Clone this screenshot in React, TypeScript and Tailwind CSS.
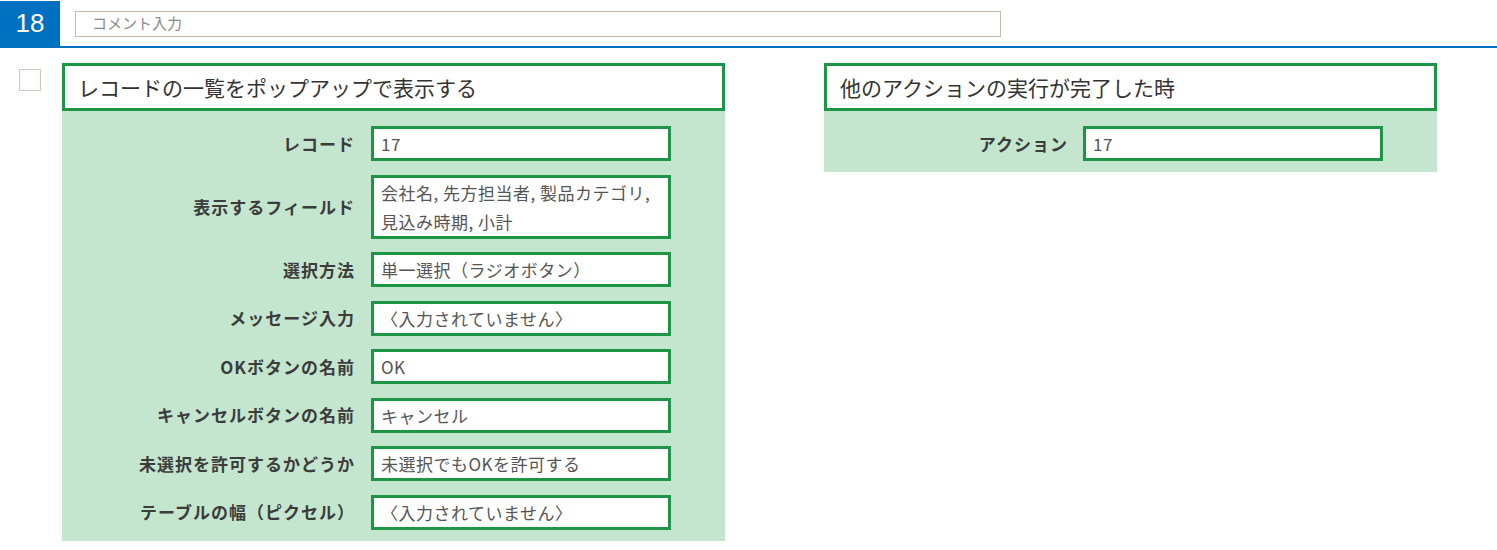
type Field = { label: string; value: string }

const popupFields: Field[] = [
  { label: 'レコード', value: '17' },
  { label: '表示するフィールド', value: '会社名, 先方担当者, 製品カテゴリ,\n見込み時期, 小計' },
  { label: '選択方法', value: '単一選択（ラジオボタン）' },
  { label: 'メッセージ入力', value: '〈入力されていません〉' },
  { label: 'OKボタンの名前', value: 'OK' },
  { label: 'キャンセルボタンの名前', value: 'キャンセル' },
  { label: '未選択を許可するかどうか', value: '未選択でもOKを許可する' },
  { label: 'テーブルの幅（ピクセル）', value: '〈入力されていません〉' },
]

const triggerFields: Field[] = [{ label: 'アクション', value: '17' }]

const font = { fontFamily: '"Noto Sans CJK JP", "Noto Sans", sans-serif' }

export default function App() {
  return (
    <div className="w-[1497px] h-[550px] bg-white overflow-hidden" style={font}>
      {/* step header */}
      <div className="flex items-center border-b-2 border-[#0070c0] pt-[1px]">
        <div className="w-[60px] h-[45px] bg-[#0070c0] text-white text-[26px] flex items-center justify-center" style={{ fontFamily: '"Liberation Sans", sans-serif' }}>
          18
        </div>
        <div className="ml-[15px] w-[926px] h-[26px] border border-[#c6b7a8] flex items-center pl-[16px] text-[15px] text-[#8a8a8a]">
          コメント入力
        </div>
      </div>

      <div className="flex items-start pt-[15px]">
        <div className="ml-[19px] mt-[6px] w-[22px] h-[22px] border border-[#d4c6b8] bg-white" />

        <div className="ml-[21px] flex items-start gap-[99px]">
          <ActionCard title="レコードの一覧をポップアップで表示する" fields={popupFields} width="w-[663px]" labelWidth="w-[293px]" gap="gap-[16px]" />
          <ActionCard title="他のアクションの実行が完了した時" fields={triggerFields} width="w-[613px]" labelWidth="w-[244px]" gap="gap-[15px]" />
        </div>
      </div>
    </div>
  )
}

function ActionCard({
  title,
  fields,
  width,
  labelWidth,
  gap,
}: {
  title: string
  fields: Field[]
  width: string
  labelWidth: string
  gap: string
}) {
  return (
    <div className={width}>
      <div className="h-[48px] border-[3px] border-[#1c9544] bg-white flex items-center pl-[13px] pt-[2px] text-[21px] text-[#333]">
        {title}
      </div>
      <div className="bg-[#c4e6cf] pt-[15px] pb-[11px] flex flex-col gap-[13.5px]">
        {fields.map((f) => (
          <div key={f.label} className={`flex items-center ${gap}`}>
            <div className={`${labelWidth} text-right font-bold text-[17px] text-[#3c3c3c] tracking-[1px]`}>{f.label}</div>
            <div className="w-[300px] border-[3px] border-[#1c9544] bg-white px-[7px] leading-[29px] text-[17px] text-[#555] tracking-[0.5px] whitespace-pre-line">
              {f.value}
            </div>
          </div>
        ))}
      </div>
    </div>
  )
}
